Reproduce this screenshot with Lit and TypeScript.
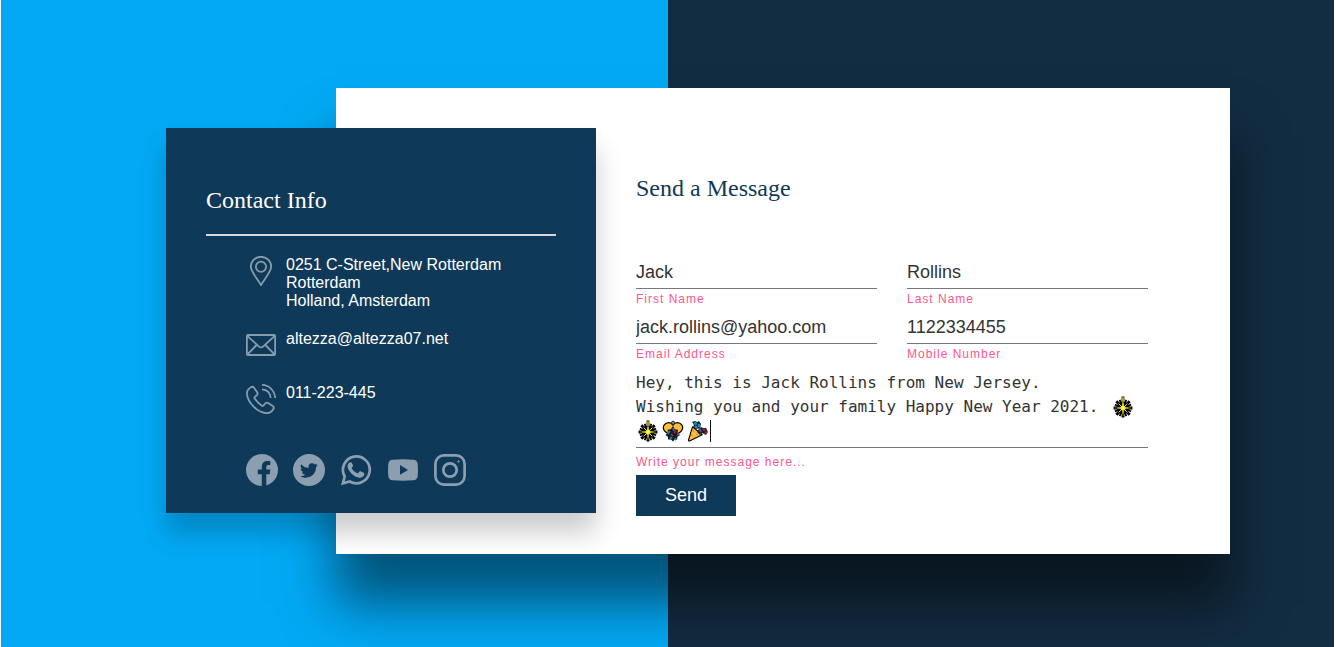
import { LitElement, html, css, svg } from "lit";
import { customElement } from "lit/decorators.js";

const pin = svg`<svg viewBox="0 0 30 30" aria-hidden="true"><g fill="none" stroke="currentColor" stroke-width="1.8"><path d="M15 29.2C12.200 23.600 4.800 16 4.800 10.600a10.200 9.800 0 0 1 20.400 0C25.200 16 17.800 23.600 15 29.200Z"/><circle cx="15" cy="10.800" r="5.100"/></g></svg>`;
const mail = svg`<svg viewBox="0 0 30 30" aria-hidden="true"><g fill="none" stroke="currentColor" stroke-width="1.8"><rect x=".9" y="5" width="28.200" height="20" rx="1"/><path d="M1 5.600 13 16.600q2 1.600 4 0L29 5.600M1.200 24.600 10.600 15M28.800 24.600 19.400 15"/></g></svg>`;
const phone = svg`<svg viewBox="0 0 30 30" aria-hidden="true"><g fill="none" stroke="currentColor" stroke-width="1.8"><path d="M5 3.200C2.200 4.800.6 7.400 1 10.400 2 19 11.400 28.400 20 29.200c3 .2 5.800-1.400 7.400-4.200.7-1.200.4-2.200-.7-2.900l-4.600-3c-1.200-.8-2.400-.5-3.200.6l-1.100 1.500c-.6.8-1.500.9-2.300.3-2.600-1.800-4.900-4.100-6.700-6.700-.6-.8-.4-1.700.4-2.300l1.400-1c1.100-.8 1.300-2 .6-3.200L8 3.700C7.300 2.600 6.200 2.500 5 3.200Z"/><path d="M16 .9C23.400 1.200 28.800 6.600 29.200 14M16 5.400c5 .4 8.300 3.800 8.700 8.600"/></g></svg>`;

const facebook = svg`<svg viewBox="0 0 32 32" aria-hidden="true"><circle cx="16" cy="16" r="16" fill="currentColor"/><path fill="#0f3959" d="M15.800 32V20.300h-4v-4.700h4v-2.500c0-4.200 2.200-6.100 5.900-6.100 1.100 0 1.900.1 2.600.2v3.900h-2.100c-1.300 0-1.900.7-1.900 2.100v2.400h4l-.6 4.700h-3.400V32Z"/></svg>`;
const twitter = svg`<svg viewBox="0 0 32 32" aria-hidden="true"><path fill="currentColor" fill-rule="evenodd" d="M16 0a16 16 0 1 0 0 32 16 16 0 0 0 0-32Zm9 11c-.6.9-1.200 1.500-2 2.100v.5c0 5-3.800 10.100-10.200 10.100-2.200 0-4-.6-5.700-1.500 2.100.2 3.800-.3 5.200-1.400-1.600-.1-2.900-1.100-3.300-2.500.6.1 1.100.1 1.600-.1-1.700-.4-2.900-1.800-2.900-3.600.5.3 1 .4 1.600.5-1.600-1.200-2-3.200-1.100-4.900 2 2.300 4.400 3.500 7.400 3.700-.6-2.600 1.200-4.600 3.500-4.600 1.100 0 2 .4 2.700 1.200.8-.2 1.600-.4 2.300-.9-.3.9-.8 1.500-1.600 2 .8-.1 1.500-.3 2.500-.6Z"/></svg>`;
const whatsapp = svg`<svg viewBox="0 0 32 32" aria-hidden="true"><path fill="none" stroke="currentColor" stroke-width="2.700" d="m2.900 29.300 1.800-6.800A13.400 13.400 0 1 1 9.700 27.500Z"/><path fill="currentColor" d="M11.800 9c-.3-.7-.6-.8-1.200-.8-.7 0-1.300.2-1.800.8-2.300 2.500-1 5.700.6 7.900 2.600 3.600 5.300 5.700 8.900 6.700 2.400.7 5.700-.6 6-3.300.1-.9 0-1.200-.6-1.500l-3-1.500c-.6-.3-1-.2-1.300.3l-1.100 1.400c-.3.4-.6.4-1.100.2-2.400-1-4.100-2.500-5.400-4.700-.3-.5-.1-.8.2-1.100l.9-1.100c.3-.4.3-.7.1-1.100Z"/></svg>`;
const youtube = svg`<svg viewBox="0 0 32 32" aria-hidden="true"><path fill="currentColor" fill-rule="evenodd" d="M5.500 5.700c7-.7 14-.7 21 0 2.400.2 3.900 1.600 4.200 4 .4 4.200.4 8.400 0 12.600-.3 2.400-1.800 3.800-4.200 4-7 .6-14 .6-21 0-2.400-.2-3.900-1.600-4.200-4-.4-4.200-.4-8.400 0-12.600.3-2.400 1.800-3.800 4.200-4ZM13 11v9.800l8-4.900Z"/></svg>`;
const instagram = svg`<svg viewBox="0 0 32 32" aria-hidden="true"><g fill="none" stroke="currentColor" stroke-width="2.700"><rect x="1.400" y="1.400" width="29.200" height="29.200" rx="8.500"/><circle cx="16" cy="16" r="6.700"/></g><path d="M24.500 5.800 25 7.100l1.300.4-1.300.5-.5 1.300L24 8l-1.300-.5L24 7.100Z" fill="currentColor"/></svg>`;

const sparkler = svg`<svg viewBox="0 0 22 22" aria-hidden="true"><g stroke-linecap="square" fill="none"><path stroke="#000" stroke-width="2.800" d="M11 2v18M3 12h16M5.300 6.300l11.400 11.400M16.700 6.300 5.300 17.700"/><path stroke="#000" stroke-width="1.800" d="m8 4.700 6 14.600M14 4.700 8 19.300M3.700 9l14.600 6M18.300 9 3.700 15"/><path stroke="#c9bd14" stroke-width="1" d="M11 12v7M4 12h14M6.500 7.500l9 9M15.500 7.500l-9 9"/><path stroke="#f1df20" stroke-width="1.400" d="M11 2v9"/></g><circle cx="11" cy="12" r="5.600" fill="none" stroke="#000" stroke-width="1.500"/><path stroke="#e9da1c" stroke-width="1" d="M11 6v12M5 12h12M7 8l8 8M15 8l-8 8"/><circle cx="11" cy="12" r="2.500" fill="#f8e91d"/><circle cx="11" cy="12" r="1.200" fill="#fff9a0"/></svg>`;
const confettiBall = svg`<svg viewBox="0 0 22 22" aria-hidden="true"><path fill="#fcbf3e" stroke="#000" stroke-width="1.200" d="M11 5.300C9 1.800 4.500 1.800 2 5.200c-2 3.600.5 8 9 9.800 8.500-1.800 11-6.200 9-9.800-2.500-3.400-7-3.400-9 .1Z"/><circle cx="11" cy="2.800" r="1.600" fill="#8c9199" stroke="#222"/><path fill="#151721" d="m11 6 1.800 3.200 3.200.5-.4 3 2.400 2.400-2.600 1.600-.2 2.900-2.600-.2L11 21.600l-2-2.200-2.900.2-.2-2.900-2.400-1.600 2.400-2.400-.3-3 3.200-.5Z"/><path stroke="#1683a5" stroke-width="2" d="m8 11-2 3m4 3-2 2m5-1 1 2"/><path stroke="#634aa5" stroke-width="2" d="m11 8 1 3m3 3 2 1"/><path stroke="#bd3138" stroke-width="1.500" d="m12 13 2-2m-3 5-2-2"/></svg>`;
const partyPopper = svg`<svg viewBox="0 0 22 22" aria-hidden="true"><path fill="#fcbf3e" stroke="#000" stroke-width="1.100" stroke-linejoin="round" d="M5.500 6.800 1.500 20c-.2.800.3 1.200 1 .9l12.700-6.200Z"/><path fill="#17202b" d="m5 2 3-1 2 1 2-1 2 3-1 4-4 1-3-2 1-2Zm7 7 2-2 2 1 3 0 2 4-2 3-4-2-2 2-3-3Z"/><path stroke="#168fb2" stroke-width="2.400" d="M7 3l3 1m2 0v3M8 6l2 2"/><path stroke="#ae2732" stroke-width="2" d="m16 9 2 1m0 2 2 1"/><path stroke="#66458e" stroke-width="2" d="m12 8 2 4"/><path stroke="#db7b25" d="m6 10 1 2m-3 3 2 1m3-2 2 1"/></svg>`;

@customElement("contact-info")
class ContactInfo extends LitElement {
  static styles = css`
    :host {
      display: block;
      box-sizing: border-box;
      padding: 58px 40px 27px;
      background: #0f3959;
      color: #fff;
      box-shadow: 0 20px 25px rgba(0, 0, 0, 0.2);
      font: 16px/18px "Liberation Sans", Arial, sans-serif;
    }
    h2 {
      margin: 0;
      padding-bottom: 20px;
      border-bottom: 2px solid #d8d8d8;
      font: 24px/28px "Liberation Serif", "Times New Roman", serif;
    }
    address {
      font-style: normal;
    }
    .details,
    .social {
      list-style: none;
      margin: 0;
      padding: 0 0 0 40px;
      display: flex;
    }
    .details {
      margin-top: 20px;
      flex-direction: column;
      gap: 20px;
    }
    .details li {
      display: flex;
      gap: 10px;
      min-height: 34px;
    }
    .glyph {
      flex: none;
      width: 30px;
      height: 30px;
      color: #879cac;
    }
    svg {
      display: block;
      width: 100%;
      height: 100%;
    }
    .details a {
      color: inherit;
      text-decoration: none;
    }
    .social {
      margin-top: 36px;
      gap: 15px;
    }
    .social a {
      display: block;
      width: 32px;
      height: 32px;
      color: #8b9fb0;
    }
  `;

  private links = [
    { name: "Facebook", icon: facebook },
    { name: "Twitter", icon: twitter },
    { name: "WhatsApp", icon: whatsapp },
    { name: "YouTube", icon: youtube },
    { name: "Instagram", icon: instagram },
  ];

  render() {
    return html`
      <h2>Contact Info</h2>
      <address>
        <ul class="details">
          <li>
            <span class="glyph">${pin}</span>
            <span>0251 C-Street,New Rotterdam<br />Rotterdam<br />Holland, Amsterdam</span>
          </li>
          <li>
            <span class="glyph">${mail}</span>
            <a href="mailto:altezza@altezza07.net">altezza@altezza07.net</a>
          </li>
          <li>
            <span class="glyph">${phone}</span>
            <a href="tel:011223445">011-223-445</a>
          </li>
        </ul>
      </address>
      <ul class="social">
        ${this.links.map((l) => html`<li><a href="#" aria-label=${l.name}>${l.icon}</a></li>`)}
      </ul>
    `;
  }
}

@customElement("message-form")
class MessageForm extends LitElement {
  static styles = css`
    :host {
      display: block;
      font-family: "Liberation Sans", Arial, sans-serif;
    }
    h2 {
      margin: 0 0 55px;
      color: #0f3959;
      font: 24px/28px "Liberation Serif", "Times New Roman", serif;
    }
    form {
      display: grid;
      grid-template-columns: 1fr 1fr;
      gap: 3px 30px;
    }
    .field {
      display: flex;
      flex-direction: column;
      min-width: 0;
    }
    .wide {
      grid-column: 1 / -1;
    }
    input,
    textarea {
      box-sizing: border-box;
      display: block;
      width: 100%;
      margin: 0;
      border: 0;
      border-bottom: 1px solid #777;
      border-radius: 0;
      outline: 0;
      background: transparent;
      color: #333;
    }
    input {
      height: 32px;
      padding: 5px 0;
      font: 18px/21px "Liberation Sans", Arial, sans-serif;
    }
    textarea {
      height: 81px;
      padding: 4px 0;
      resize: none;
      overflow: hidden;
      font: 16px/24px "DejaVu Sans Mono", Consolas, monospace;
    }
    label {
      color: #ff568c;
      font-size: 12px;
      line-height: 20px;
      letter-spacing: 1px;
    }
    .wide label {
      margin-top: 4px;
    }
    .message {
      position: relative;
    }
    .emoji {
      position: absolute;
      display: flex;
      align-items: center;
      gap: 3px;
      height: 24px;
    }
    .emoji svg {
      display: block;
      width: 22px;
      height: 22px;
    }
    .line-end {
      top: 28px;
      left: 476px;
    }
    .line-start {
      top: 52px;
      left: 1px;
    }
    .caret {
      width: 1px;
      height: 22px;
      margin-left: -2px;
      background: #111;
    }
    button {
      width: 100px;
      height: 41px;
      padding: 0;
      border: 0;
      background: #0f3959;
      color: #fff;
      font: 18px/21px "Liberation Sans", Arial, sans-serif;
      cursor: pointer;
    }
  `;

  private fields = [
    { id: "first", label: "First Name", type: "text", value: "Jack" },
    { id: "last", label: "Last Name", type: "text", value: "Rollins" },
    { id: "email", label: "Email Address", type: "email", value: "jack.rollins@yahoo.com" },
    { id: "mobile", label: "Mobile Number", type: "tel", value: "1122334455" },
  ];

  private message =
    "Hey, this is Jack Rollins from New Jersey.\nWishing you and your family Happy New Year 2021.";

  render() {
    return html`
      <h2>Send a Message</h2>
      <form @submit=${(e: Event) => e.preventDefault()}>
        ${this.fields.map(
          (f) => html`<div class="field">
            <input id=${f.id} type=${f.type} .value=${f.value} />
            <label for=${f.id}>${f.label}</label>
          </div>`
        )}
        <div class="field wide">
          <div class="message">
            <textarea id="message" spellcheck="false" .value=${this.message}></textarea>
            <span class="emoji line-end">${sparkler}</span>
            <span class="emoji line-start">
              ${sparkler}${confettiBall}${partyPopper}<span class="caret"></span>
            </span>
          </div>
          <label for="message">Write your message here...</label>
        </div>
        <button type="submit">Send</button>
      </form>
    `;
  }
}

@customElement("app-root")
class AppRoot extends LitElement {
  static styles = css`
    :host {
      display: block;
      padding: 0 2px 0 1px;
      background: #fff;
    }
    main {
      box-sizing: border-box;
      min-height: 100vh;
      padding: 88px 104px 88px 165px;
      display: grid;
      grid-template-columns: 170px 260px 1fr;
      align-items: start;
      overflow: hidden;
      background: linear-gradient(90deg, #03a9f5 calc(50% + 1px), #122c41 calc(50% + 1px));
    }
    .panel {
      grid-area: 1 / 2 / 2 / 4;
      padding: 86px 82px 38px 300px;
      background: #fff;
      box-shadow: 0 50px 50px rgba(0, 0, 0, 0.5);
    }
    contact-info {
      grid-area: 1 / 1 / 2 / 3;
      margin-top: 40px;
    }
  `;

  render() {
    return html`
      <main>
        <section class="panel"><message-form></message-form></section>
        <contact-info></contact-info>
      </main>
    `;
  }
}
